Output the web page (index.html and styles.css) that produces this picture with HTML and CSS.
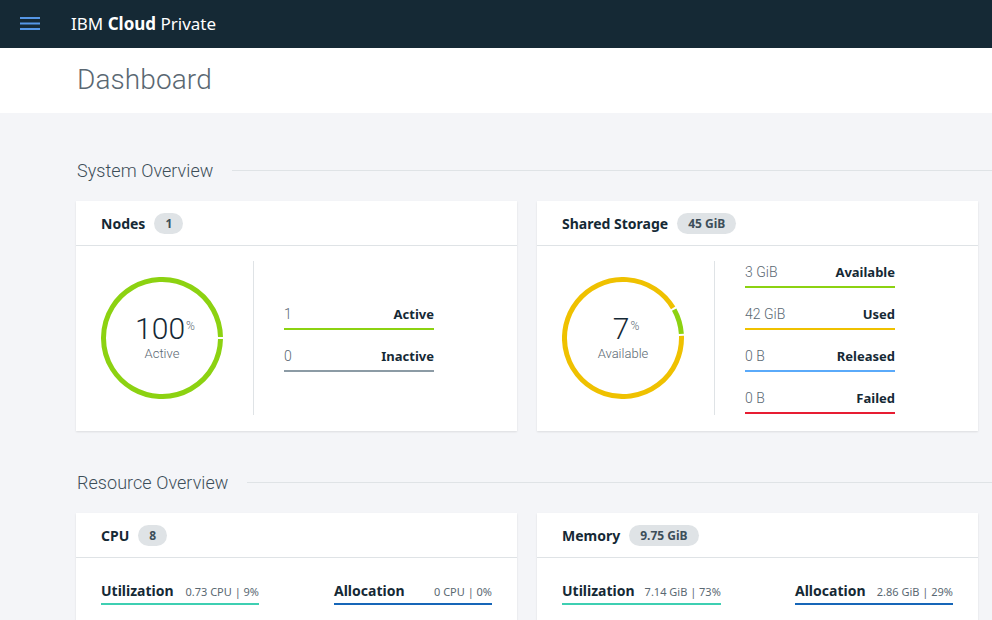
FILE: index.html
```html
<!DOCTYPE html>
<html lang="en">
<head>
<meta charset="utf-8">
<title>IBM Cloud Private - Dashboard</title>
<link rel="stylesheet" href="styles.css">
</head>
<body>
<header class="topbar">
  <button class="menu-btn" aria-label="Menu">
    <svg width="20" height="14" viewBox="0 0 20 14"><rect x="0" y="0" width="20" height="2" fill="#5596e6"/><rect x="0" y="5.5" width="20" height="2" fill="#5596e6"/><rect x="0" y="11" width="20" height="2" fill="#5596e6"/></svg>
  </button>
  <div class="brand">IBM <b>Cloud</b> Private</div>
</header>
<div class="pagehead">
  <h1>Dashboard</h1>
</div>
<main class="content">
  <section>
    <div class="section-title"><h2>System Overview</h2><span class="rule"></span></div>
    <div class="cards">
      <div class="card">
        <div class="card-head"><span class="card-label">Nodes</span><span class="badge">1</span></div>
        <div class="card-body donut-body">
          <div class="donut-col">
            <div class="donut">
              <svg width="122" height="122" viewBox="0 0 122 122">
                <path d="M119.49 62.02 A58.5 58.5 0 1 1 119.49 59.98" fill="none" stroke="#8cd211" stroke-width="5"/>
              </svg>
              <div class="donut-text"><div class="pct">100<sup>%</sup></div><div class="pct-label">Active</div></div>
            </div>
          </div>
          <div class="legend">
            <div class="legend-row green"><span class="val">1</span><span class="lab">Active</span></div>
            <div class="legend-row gray"><span class="val">0</span><span class="lab">Inactive</span></div>
          </div>
        </div>
      </div>
      <div class="card">
        <div class="card-head"><span class="card-label">Shared Storage</span><span class="badge">45 GiB</span></div>
        <div class="card-body donut-body">
          <div class="donut-col">
            <div class="donut">
              <svg width="122" height="122" viewBox="0 0 122 122">
                <path d="M119.46 58.96 A58.5 58.5 0 1 1 111.14 30.87" fill="none" stroke="#efc100" stroke-width="5"/>
                <path d="M112.17 32.64 A58.5 58.5 0 0 1 119.36 56.92" fill="none" stroke="#8cd211" stroke-width="5"/>
              </svg>
              <div class="donut-text"><div class="pct">7<sup>%</sup></div><div class="pct-label">Available</div></div>
            </div>
          </div>
          <div class="legend">
            <div class="legend-row green"><span class="val">3 GiB</span><span class="lab">Available</span></div>
            <div class="legend-row yellow"><span class="val">42 GiB</span><span class="lab">Used</span></div>
            <div class="legend-row blue"><span class="val">0 B</span><span class="lab">Released</span></div>
            <div class="legend-row red"><span class="val">0 B</span><span class="lab">Failed</span></div>
          </div>
        </div>
      </div>
    </div>
  </section>
  <section>
    <div class="section-title second"><h2>Resource Overview</h2><span class="rule"></span></div>
    <div class="cards">
      <div class="card">
        <div class="card-head"><span class="card-label">CPU</span><span class="badge">8</span></div>
        <div class="card-body metrics">
          <div class="metric teal"><span class="m-lab">Utilization</span><span class="m-val">0.73 CPU | 9%</span></div>
          <div class="metric navy"><span class="m-lab">Allocation</span><span class="m-val">0 CPU | 0%</span></div>
        </div>
      </div>
      <div class="card">
        <div class="card-head"><span class="card-label">Memory</span><span class="badge">9.75 GiB</span></div>
        <div class="card-body metrics">
          <div class="metric teal"><span class="m-lab">Utilization</span><span class="m-val">7.14 GiB | 73%</span></div>
          <div class="metric navy"><span class="m-lab">Allocation</span><span class="m-val">2.86 GiB | 29%</span></div>
        </div>
      </div>
    </div>
  </section>
</main>
</body>
</html>
```
FILE: styles.css
```css
* { box-sizing: border-box; }
html, body { margin: 0; padding: 0; }
body {
  font-family: "Noto Sans", "Liberation Sans", sans-serif;
  background: #f4f5f8;
  color: #152935;
  width: 992px;
  height: 620px;
  overflow: hidden;
}
.topbar {
  height: 48px;
  background: #152935;
  display: flex;
  align-items: center;
}
.menu-btn {
  background: none;
  border: 0;
  padding: 0;
  margin: 0 0 0 20px;
  width: 20px;
  height: 14px;
  display: flex;
}
.brand {
  margin-left: 31px;
  margin-bottom: 2px;
  color: #fff;
  font-size: 17px;
}
.brand b { font-weight: 700; }
.pagehead {
  background: #fff;
  height: 65px;
  padding-left: 77px;
  display: flex;
  align-items: center;
}
.pagehead h1 {
  margin: 0 0 3px 0;
  font-family: Roboto, "Noto Sans", sans-serif;
  font-weight: 300;
  font-size: 28px;
  color: #5a6872;
  letter-spacing: 0.1px;
}
.content { padding-left: 76px; }
.section-title {
  display: flex;
  align-items: center;
  margin-top: 44px;
  height: 26px;
  margin-bottom: 18px;
}
.section-title.second { margin-top: 38px; }
.section-title h2 {
  margin: 0 0 0 1px;
  font-family: Roboto, "Noto Sans", sans-serif;
  font-weight: 300;
  font-size: 18px;
  letter-spacing: 0.05px;
  color: #3d4e59;
}
.rule {
  flex: 1;
  height: 1px;
  background: #dfe3e6;
  margin-left: 19px;
}
.cards {
  display: grid;
  grid-template-columns: 1fr 1fr;
  gap: 20px;
  width: 902px;
}
.card {
  background: #fff;
  box-shadow: 0 1px 2px rgba(0,0,0,0.1);
}
.card-head {
  height: 45px;
  border-bottom: 1px solid #dfe3e6;
  display: flex;
  align-items: center;
  padding-left: 25px;
  gap: 9px;
}
.card-label {
  font-size: 14px;
  font-weight: 700;
  color: #152935;
}
.badge {
  background: #dfe3e6;
  color: #3d4e59;
  font-size: 12px;
  font-weight: 700;
  height: 21px;
  line-height: 21px;
  padding: 0 11px;
  border-radius: 11px;
}
.donut-body {
  display: flex;
  padding: 15px 0 16px 25px;
}
.donut-col {
  width: 153px;
  border-right: 1px solid #dfe3e6;
  display: flex;
  align-items: center;
  height: 154px;
}
.donut {
  position: relative;
  width: 122px;
  height: 122px;
}
.donut svg { display: block; }
.donut-text {
  position: absolute;
  inset: 0;
  display: flex;
  flex-direction: column;
  align-items: center;
  justify-content: center;
}
.pct {
  font-family: Roboto, "Noto Sans", sans-serif;
  font-size: 30px;
  font-weight: 300;
  line-height: 28px;
  color: #152935;
  padding-left: 6px;
}
.pct sup {
  font-size: 12px;
  vertical-align: top;
  position: relative;
  top: -3px;
  margin-left: 1px;
  color: #5a6872;
}
.pct-label {
  font-family: Roboto, "Noto Sans", sans-serif;
  font-size: 13px;
  font-weight: 300;
  line-height: 16px;
  color: #5a6872;
  margin-top: 3px;
}
.legend {
  margin-left: 30px;
  width: 150px;
  display: flex;
  flex-direction: column;
  justify-content: center;
  gap: 16px;
}
.legend-row {
  display: flex;
  justify-content: space-between;
  align-items: baseline;
  height: 26px;
  font-size: 13px;
  line-height: 20px;
  border-bottom: 2px solid #8cd211;
}
.legend-row .val { color: #5a6872; font-family: Roboto, "Noto Sans", sans-serif; font-weight: 300; font-size: 14px; }
.legend-row .lab { font-weight: 700; color: #152935; }
.legend-row.gray { border-color: #8c9ba5; }
.legend-row.yellow { border-color: #efc100; }
.legend-row.blue { border-color: #5aaafa; }
.legend-row.red { border-color: #e71d32; }
.metrics {
  display: flex;
  justify-content: space-between;
  padding: 23px 25px 0 25px;
  height: 70px;
}
.metric {
  display: flex;
  justify-content: space-between;
  align-items: baseline;
  gap: 10px;
  min-width: 158px;
  height: 24px;
  border-bottom: 2px solid #3ecfb2;
}
.metric.navy { border-color: #1666b8; }
.m-lab { font-size: 14px; font-weight: 700; color: #152935; }
.m-val { font-size: 11px; color: #5a6872; }
```
